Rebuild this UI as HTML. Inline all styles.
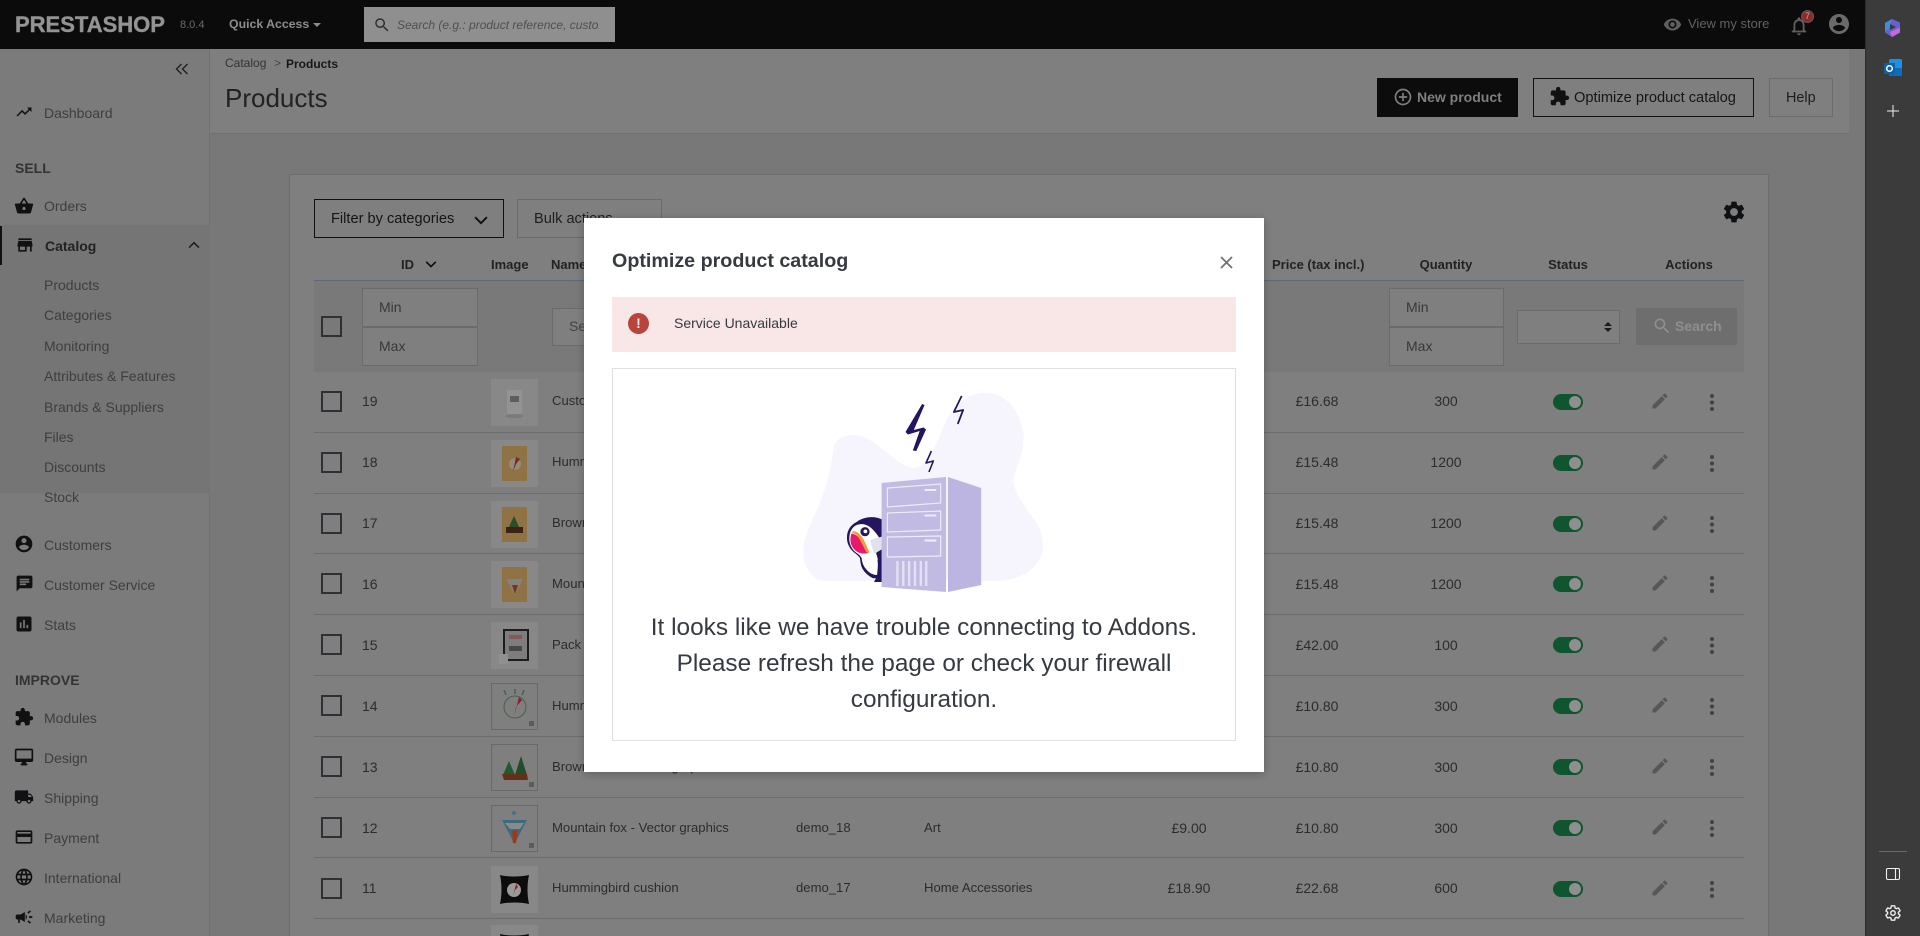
<!DOCTYPE html>
<html lang="en"><head><meta charset="utf-8"><title>Products</title>
<style>
html,body{margin:0;padding:0;width:1920px;height:936px;overflow:hidden;background:#787878;font-family:"Liberation Sans",sans-serif;color:#2c2c2e}
div,span,svg{position:absolute}
#root{left:0;top:0;width:1920px;height:936px;overflow:hidden;background:#787878}
.t{white-space:nowrap;line-height:20px;height:20px;margin-top:-10px;font-size:14px}
.c{transform:translateX(-50%)}
.s{left:44px;color:#3e3e3e;margin-top:-10.5px}
.ic{fill:#111113}
.b{font-weight:bold}
.r{left:0;top:0;width:0;height:0}
.r .t{margin-top:-10.5px}
.cb{left:321px;top:-11px;width:17px;height:17px;border:2px solid #2e3036;background:transparent}
.id{left:362px}
.im{left:491px;top:-23px;width:47px;height:47px}
.nm,.rf,.ct{font-size:13.1px}
.nm{left:552px}.rf{left:796px}.ct{left:924px}
.p1{left:1189px}.p2{left:1317px}.q{left:1446px}
.tg{left:1553px;top:-8px;width:30px;height:16px;border-radius:8px;background:#0f5530}
.tg i{position:absolute;left:16px;top:2px;width:12px;height:12px;border-radius:50%;background:#8f8f8f}
.pe{left:1650px;top:-11px;width:20px;height:20px;fill:#575757}
.dt{left:1710px;top:-8px;width:4px;height:4px;border-radius:50%;background:#3f4348;box-shadow:0 6.5px 0 #3f4348,0 13px 0 #3f4348}
.ln{left:314px;width:1430px;height:1px;background:#6c6c6c}
.inp{background:#7f7f7f;border:1px solid #6b6b6b;box-sizing:border-box}
</style></head><body>
<div id="root">
<svg width="0" height="0" style="left:0;top:0"><defs>
<symbol id="i-trend" viewBox="0 0 24 24"><path d="M16 6l2.29 2.29-4.88 4.88-4-4L2 16.59 3.41 18l6-6 4 4 6.3-6.29L22 12V6z"/></symbol>
<symbol id="i-basket" viewBox="0 0 24 24"><path d="M17.21 9l-4.38-6.56c-.19-.28-.51-.42-.83-.42-.32 0-.64.14-.83.43L6.79 9H2c-.55 0-1 .45-1 1 0 .09.01.18.04.27l2.54 9.27c.23.84 1 1.46 1.92 1.46h13c.92 0 1.69-.62 1.93-1.46l2.54-9.27L23 10c0-.55-.45-1-1-1h-4.79zM9 9l3-4.4L15 9H9zm3 8c-1.1 0-2-.9-2-2s.9-2 2-2 2 .9 2 2-.9 2-2 2z"/></symbol>
<symbol id="i-store" viewBox="0 0 24 24"><path d="M20 4H4v2h16V4zm1 10v-2l-1-5H4l-1 5v2h1v6h10v-6h4v6h2v-6h1zm-9 4H6v-4h6v4z"/></symbol>
<symbol id="i-acc" viewBox="0 0 24 24"><path d="M12 2C6.48 2 2 6.48 2 12s4.48 10 10 10 10-4.48 10-10S17.52 2 12 2zm0 3c1.66 0 3 1.34 3 3s-1.34 3-3 3-3-1.34-3-3 1.34-3 3-3zm0 14.2c-2.5 0-4.71-1.28-6-3.22.03-1.99 4-3.08 6-3.08 1.99 0 5.97 1.09 6 3.08-1.29 1.94-3.5 3.22-6 3.22z"/></symbol>
<symbol id="i-chat" viewBox="0 0 24 24"><path d="M20 2H4c-1.1 0-2 .9-2 2v18l4-4h14c1.1 0 2-.9 2-2V4c0-1.1-.9-2-2-2zM6 9h12v2H6V9zm8 5H6v-2h8v2zm4-6H6V6h12v2z"/></symbol>
<symbol id="i-stat" viewBox="0 0 24 24"><path d="M19 3H5c-1.1 0-2 .9-2 2v14c0 1.1.9 2 2 2h14c1.1 0 2-.9 2-2V5c0-1.1-.9-2-2-2zM9 17H7v-7h2v7zm4 0h-2V7h2v10zm4 0h-2v-4h2v4z"/></symbol>
<symbol id="i-ext" viewBox="0 0 24 24"><path d="M20.5 11H19V7c0-1.1-.9-2-2-2h-4V3.5C13 2.12 11.88 1 10.5 1S8 2.12 8 3.5V5H4c-1.1 0-1.99.9-1.99 2v3.8H3.5c1.49 0 2.7 1.21 2.7 2.7s-1.21 2.7-2.7 2.7H2V20c0 1.1.9 2 2 2h3.8v-1.5c0-1.49 1.21-2.7 2.7-2.7 1.49 0 2.7 1.21 2.7 2.7V22H17c1.1 0 2-.9 2-2v-4h1.5c1.38 0 2.5-1.12 2.5-2.5S21.88 11 20.5 11z"/></symbol>
<symbol id="i-desk" viewBox="0 0 24 24"><path d="M21 2H3c-1.1 0-2 .9-2 2v12c0 1.1.9 2 2 2h7l-2 3v1h8v-1l-2-3h7c1.1 0 2-.9 2-2V4c0-1.1-.9-2-2-2zm0 12H3V4h18v10z"/></symbol>
<symbol id="i-ship" viewBox="0 0 24 24"><path d="M20 8h-3V4H3c-1.1 0-2 .9-2 2v11h2c0 1.66 1.34 3 3 3s3-1.34 3-3h6c0 1.66 1.34 3 3 3s3-1.34 3-3h2v-5l-3-4zM6 18.5c-.83 0-1.5-.67-1.5-1.5s.67-1.5 1.5-1.5 1.5.67 1.5 1.5-.67 1.5-1.5 1.5zm13.5-9l1.96 2.5H17V9.5h2.5zm-1.5 9c-.83 0-1.5-.67-1.5-1.5s.67-1.5 1.5-1.5 1.5.67 1.5 1.5-.67 1.5-1.5 1.5z"/></symbol>
<symbol id="i-pay" viewBox="0 0 24 24"><path d="M20 4H4c-1.11 0-1.99.89-1.99 2L2 18c0 1.11.89 2 2 2h16c1.11 0 2-.89 2-2V6c0-1.11-.89-2-2-2zm0 14H4v-6h16v6zm0-10H4V6h16v2z"/></symbol>
<symbol id="i-lang" viewBox="0 0 24 24"><path d="M11.99 2C6.47 2 2 6.48 2 12s4.47 10 9.99 10C17.52 22 22 17.52 22 12S17.52 2 11.99 2zm6.93 6h-2.95c-.32-1.25-.78-2.45-1.38-3.56 1.84.63 3.37 1.91 4.33 3.56zM12 4.04c.83 1.2 1.48 2.53 1.91 3.96h-3.82c.43-1.43 1.08-2.76 1.91-3.96zM4.26 14C4.1 13.36 4 12.69 4 12s.1-1.36.26-2h3.38c-.08.66-.14 1.32-.14 2 0 .68.06 1.34.14 2H4.26zm.82 2h2.95c.32 1.25.78 2.45 1.38 3.56-1.84-.63-3.37-1.9-4.33-3.56zm2.95-8H5.08c.96-1.66 2.49-2.93 4.33-3.56C8.81 5.55 8.35 6.75 8.03 8zM12 19.96c-.83-1.2-1.48-2.53-1.91-3.96h3.82c-.43 1.43-1.08 2.76-1.91 3.96zM14.34 14H9.66c-.09-.66-.16-1.32-.16-2 0-.68.07-1.35.16-2h4.68c.09.65.16 1.32.16 2 0 .68-.07 1.34-.16 2zm.25 5.56c.6-1.11 1.06-2.31 1.38-3.56h2.95c-.96 1.65-2.49 2.93-4.33 3.56zM16.36 14c.08-.66.14-1.32.14-2 0-.68-.06-1.34-.14-2h3.38c.16.64.26 1.31.26 2s-.1 1.36-.26 2h-3.38z"/></symbol>
<symbol id="i-camp" viewBox="0 0 24 24"><path d="M18 11v2h4v-2h-4zm-2 6.61c.96.71 2.21 1.65 3.2 2.39.4-.53.8-1.07 1.2-1.6-.99-.74-2.24-1.68-3.2-2.4-.4.54-.8 1.08-1.2 1.61zM20.4 5.6c-.4-.53-.8-1.07-1.2-1.6-.99.74-2.24 1.68-3.2 2.4.4.53.8 1.07 1.2 1.6.96-.72 2.21-1.65 3.2-2.4zM4 9c-1.1 0-2 .9-2 2v2c0 1.1.9 2 2 2h1v4h2v-4h1l5 3V6L8 9H4zm11.5 3c0-1.33-.58-2.53-1.5-3.35v6.69c.92-.81 1.5-2.01 1.5-3.34z"/></symbol>
<symbol id="i-search" viewBox="0 0 24 24"><path d="M15.5 14h-.79l-.28-.27C15.41 12.59 16 11.11 16 9.5 16 5.91 13.09 3 9.5 3S3 5.91 3 9.5 5.91 16 9.5 16c1.61 0 3.09-.59 4.23-1.57l.27.28v.79l5 4.99L20.49 19l-4.99-5zm-6 0C7.01 14 5 11.99 5 9.5S7.01 5 9.5 5 14 7.01 14 9.5 11.99 14 9.5 14z"/></symbol>
<symbol id="i-eye" viewBox="0 0 24 24"><path d="M12 4.5C7 4.5 2.73 7.61 1 12c1.73 4.39 6 7.5 11 7.5s9.27-3.11 11-7.5c-1.73-4.39-6-7.5-11-7.5zM12 17c-2.76 0-5-2.24-5-5s2.24-5 5-5 5 2.24 5 5-2.24 5-5 5zm0-8c-1.66 0-3 1.34-3 3s1.34 3 3 3 3-1.34 3-3-1.34-3-3-3z"/></symbol>
<symbol id="i-bell" viewBox="0 0 24 24"><path d="M12 22c1.1 0 2-.9 2-2h-4c0 1.1.9 2 2 2zm6-6v-5c0-3.07-1.63-5.64-4.5-6.32V4c0-.83-.67-1.5-1.5-1.5s-1.5.67-1.5 1.5v.68C7.64 5.36 6 7.92 6 11v5l-2 2v1h16v-1l-2-2zm-2 1H8v-6c0-2.48 1.51-4.5 4-4.5s4 2.02 4 4.5v6z"/></symbol>
<symbol id="i-add" viewBox="0 0 24 24"><path d="M13 7h-2v4H7v2h4v4h2v-4h4v-2h-4V7zm-1-5C6.48 2 2 6.48 2 12s4.48 10 10 10 10-4.48 10-10S17.52 2 12 2zm0 18c-4.41 0-8-3.59-8-8s3.59-8 8-8 8 3.59 8 8-3.59 8-8 8z"/></symbol>
<symbol id="i-gear" viewBox="0 0 24 24"><path d="M19.14 12.94c.04-.3.06-.61.06-.94 0-.32-.02-.64-.07-.94l2.03-1.58c.18-.14.23-.41.12-.61l-1.92-3.32c-.12-.22-.37-.29-.59-.22l-2.39.96c-.5-.38-1.03-.7-1.62-.94l-.36-2.54c-.04-.24-.24-.41-.48-.41h-3.84c-.24 0-.43.17-.47.41l-.36 2.54c-.59.24-1.13.57-1.62.94l-2.39-.96c-.22-.08-.47 0-.59.22L2.74 8.87c-.12.21-.08.47.12.61l2.03 1.58c-.05.3-.09.63-.09.94s.02.64.07.94l-2.03 1.58c-.18.14-.23.41-.12.61l1.92 3.32c.12.22.37.29.59.22l2.39-.96c.5.38 1.03.7 1.62.94l.36 2.54c.05.24.24.41.48.41h3.84c.24 0 .44-.17.47-.41l.36-2.54c.59-.24 1.13-.56 1.62-.94l2.39.96c.22.08.47 0 .59-.22l1.92-3.32c.12-.22.07-.47-.12-.61l-2.01-1.58zM12 15.6c-1.98 0-3.6-1.62-3.6-3.6s1.62-3.6 3.6-3.6 3.6 1.62 3.6 3.6-1.62 3.6-3.6 3.6z"/></symbol>
<symbol id="i-edit" viewBox="0 0 24 24"><path d="M3 17.25V21h3.75L17.81 9.94l-3.75-3.75L3 17.25zM20.71 7.04c.39-.39.39-1.02 0-1.41l-2.34-2.34c-.39-.39-1.02-.39-1.41 0l-1.83 1.83 3.75 3.75 1.83-1.83z"/></symbol>
<symbol id="th-mug" viewBox="0 0 47 47"><rect width="47" height="47" fill="#888"/><path d="M16 11h15v23c-3 3-12 3-15 0z" fill="#939393"/><ellipse cx="23.5" cy="37" rx="9" ry="2" fill="#7a7a7a"/><rect x="19" y="17" width="9" height="6" fill="#5e5e60"/></symbol>
<symbol id="th-nb1" viewBox="0 0 47 47"><rect width="47" height="47" fill="#888"/><rect x="11" y="6" width="25" height="35" fill="#8f7345"/><circle cx="24" cy="24" r="6" fill="#958a76"/><path d="M25 17l-3 15 3-8 4-5z" fill="#702a2e"/></symbol>
<symbol id="th-nb2" viewBox="0 0 47 47"><rect width="47" height="47" fill="#888"/><rect x="11" y="6" width="25" height="35" fill="#8f7345"/><path d="M17 28l6-13 6 13z" fill="#27502a"/><rect x="15" y="26" width="17" height="6" fill="#3b2212"/></symbol>
<symbol id="th-nb3" viewBox="0 0 47 47"><rect width="47" height="47" fill="#888"/><rect x="11" y="6" width="25" height="35" fill="#8f7345"/><path d="M15 18h17l-8 16z" fill="#84827c"/><path d="M21 24h6l-3 9z" fill="#82321a"/></symbol>
<symbol id="th-pack" viewBox="0 0 47 47"><rect width="47" height="47" fill="#888"/><rect x="13" y="8" width="24" height="30" fill="#7d7d7d" stroke="#1c1c1c" stroke-width="2"/><rect x="18" y="13" width="13" height="4" fill="#85595c"/><rect x="18" y="24" width="13" height="5" fill="#484848"/><rect x="8" y="32" width="9" height="10" fill="#909090"/></symbol>
<symbol id="th-v1" viewBox="0 0 47 47"><rect x=".5" y=".5" width="46" height="46" fill="#7f7f7f" stroke="#696969"/><circle cx="24" cy="24" r="11" fill="none" stroke="#49604a"/><path d="M28 14l-5 20 2-10 6-7z" fill="#8d1e35"/><path d="M13 7l2 5M24 6v5M33 7l-2 5" stroke="#4a5a5c" stroke-width="1.4"/><rect x="38" y="38" width="5" height="5" fill="#5c5c5c"/></symbol>
<symbol id="th-v2" viewBox="0 0 47 47"><rect x=".5" y=".5" width="46" height="46" fill="#7f7f7f" stroke="#696969"/><path d="M12 31l6-14 6 14z" fill="#215a2f"/><path d="M24 31l6-19 6 19z" fill="#1e4e2a"/><path d="M11 30h25l1 6H13z" fill="#63301a"/><rect x="38" y="38" width="5" height="5" fill="#5c5c5c"/></symbol>
<symbol id="th-v3" viewBox="0 0 47 47"><rect x=".5" y=".5" width="46" height="46" fill="#7f7f7f" stroke="#696969"/><path d="M11 15h25L23.5 39z" fill="#3f6a7d"/><path d="M14 18h19l-4 6H19z" fill="#8a8a8a"/><path d="M21 26l6-1-2 13h-3z" fill="#9c3a18"/><circle cx="23" cy="8" r="2" fill="#4f6e80"/><rect x="38" y="38" width="5" height="5" fill="#5c5c5c"/></symbol>
<symbol id="th-cu" viewBox="0 0 47 47"><rect width="47" height="47" fill="#888"/><path d="M9 9c8 2 21 2 29 0-2 9-2 20 0 29-8-2-21-2-29 0 2-9 2-20 0-29z" fill="#0c0c0c"/><circle cx="23" cy="24" r="7" fill="#9c9a96"/><path d="M25 18l-3 12 2-6 3-3z" fill="#8a1f2f"/></symbol>
</defs></svg>

<!-- top bar -->
<div style="left:0;top:0;width:1865px;height:49px;background:#0b0b0b"></div>
<span class="t b" style="left:15px;top:24.5px;font-size:22px;color:#939393;-webkit-text-stroke:.4px #939393">PRESTASHOP</span>
<span class="t" style="left:180px;top:25px;font-size:11px;color:#6b6b6b">8.0.4</span>
<span class="t b" style="left:229px;top:24px;font-size:12.3px;color:#8d8d8d">Quick Access</span>
<div style="left:313px;top:23px;border:4px solid transparent;border-top-color:#8d8d8d;border-bottom:0"></div>
<div style="left:364px;top:7px;width:251px;height:35px;background:#8f8f8f"></div>
<svg style="left:373px;top:16px;fill:#2f2f2f" width="18" height="18"><use href="#i-search"/></svg>
<div style="left:397px;top:7px;width:202px;height:35px;overflow:hidden"><span class="t" style="left:0;top:17.5px;font-size:12px;font-style:italic;color:#4f4f4f">Search (e.g.: product reference, customer name…)</span></div>
<svg style="left:1663px;top:15px;fill:#5f5f5f" width="19" height="19"><use href="#i-eye"/></svg>
<span class="t" style="left:1688px;top:24px;font-size:13px;color:#626262">View my store</span>
<svg style="left:1788px;top:14px;fill:#5f5f5f" width="22" height="24"><use href="#i-bell"/></svg>
<div style="left:1801px;top:10px;width:11px;height:11px;border-radius:50%;background:#8f2a26;border:1.5px solid #5c5c5c;color:#aaa;font-size:9px;line-height:11px;text-align:center">7</div>
<svg style="left:1827px;top:12px;fill:#6a6a6a" width="24" height="24"><use href="#i-acc"/></svg>

<!-- sidebar -->
<div style="left:0;top:49px;width:209px;height:887px;background:#7b7b7b;border-right:1px solid #727272"></div>
<div style="left:0;top:225px;width:209px;height:268px;background:#757575"></div>
<div style="left:0;top:226px;width:2px;height:39px;background:#111"></div>
<svg style="left:175px;top:62px;fill:none;stroke:#1f1f1f;stroke-width:1.4" width="14" height="14"><path d="M6.5 2L1.5 7l5 5M12.5 2l-5 5 5 5"/></svg>

<svg class="ic" style="left:15px;top:103px" width="18" height="18"><use href="#i-trend"/></svg>
<span class="t s" style="top:113px">Dashboard</span>
<span class="t b" style="left:15px;top:168px;color:#333">SELL</span>
<svg class="ic" style="left:14px;top:196px" width="20" height="20"><use href="#i-basket"/></svg>
<span class="t s" style="top:206px">Orders</span>
<svg class="ic" style="left:15px;top:235px" width="20" height="20"><use href="#i-store"/></svg>
<span class="t b" style="left:45px;top:246px;color:#222">Catalog</span>
<svg style="left:184px;top:235px;fill:#1a1a1a" width="20" height="20"><path d="M3.6 12.5L10 6.1l6.4 6.4-1.2 1.2L10 8.5l-5.2 5.2z" transform="translate(1.5 1.5) scale(.85)"/></svg>
<span class="t s" style="top:285px">Products</span>
<span class="t s" style="top:315px">Categories</span>
<span class="t s" style="top:346px">Monitoring</span>
<span class="t s" style="top:376px">Attributes &amp; Features</span>
<span class="t s" style="top:407px">Brands &amp; Suppliers</span>
<span class="t s" style="top:437px">Files</span>
<span class="t s" style="top:467px">Discounts</span>
<span class="t s" style="top:497.5px">Stock</span>
<svg class="ic" style="left:14px;top:534px" width="20" height="20"><use href="#i-acc"/></svg>
<span class="t s" style="top:545px">Customers</span>
<svg class="ic" style="left:15px;top:574px" width="19" height="19"><use href="#i-chat"/></svg>
<span class="t s" style="top:585px">Customer Service</span>
<svg class="ic" style="left:14px;top:614px" width="20" height="20"><use href="#i-stat"/></svg>
<span class="t s" style="top:625px">Stats</span>
<span class="t b" style="left:15px;top:679.5px;color:#333">IMPROVE</span>
<svg class="ic" style="left:14px;top:707px" width="20" height="20"><use href="#i-ext"/></svg>
<span class="t s" style="top:718px">Modules</span>
<svg class="ic" style="left:14px;top:747px" width="20" height="20"><use href="#i-desk"/></svg>
<span class="t s" style="top:758px">Design</span>
<svg class="ic" style="left:14px;top:787px" width="20" height="20"><use href="#i-ship"/></svg>
<span class="t s" style="top:798px">Shipping</span>
<svg class="ic" style="left:14px;top:827px" width="20" height="20"><use href="#i-pay"/></svg>
<span class="t s" style="top:838px">Payment</span>
<svg class="ic" style="left:14px;top:867px" width="20" height="20"><use href="#i-lang"/></svg>
<span class="t s" style="top:878px">International</span>
<svg class="ic" style="left:14px;top:907px" width="20" height="20"><use href="#i-camp"/></svg>
<span class="t s" style="top:918px">Marketing</span>

<!-- head -->
<div style="left:210px;top:49px;width:1639px;height:84px;background:#7f7f7f;border-bottom:1px solid #707070"></div>
<span class="t" style="left:225px;top:63px;font-size:12px;color:#333">Catalog</span>
<span class="t" style="left:274px;top:63px;font-size:12px;color:#444">&gt;</span>
<span class="t b" style="left:286px;top:63.5px;font-size:12px;color:#181818">Products</span>
<span class="t" style="left:225px;top:98px;font-size:26px;line-height:30px;height:30px;margin-top:-15px;color:#222">Products</span>
<div style="left:1377px;top:78px;width:141px;height:39px;background:#0c0c0c"></div>
<svg style="left:1393px;top:87px;fill:#7e7e7e" width="20" height="20"><use href="#i-add"/></svg>
<span class="t b" style="left:1417px;top:97px;font-size:14px;color:#7f7f7f">New product</span>
<div style="left:1533px;top:78px;width:219px;height:37px;border:1px solid #111;"></div>
<svg class="ic" style="left:1549px;top:86px" width="21" height="21"><use href="#i-ext"/></svg>
<span class="t" style="left:1574px;top:98px;font-size:14.65px;color:#151515">Optimize product catalog</span>
<div style="left:1769px;top:78px;width:62px;height:37px;border:1px solid #6c6c6c"></div>
<span class="t" style="left:1786px;top:98px;font-size:14.4px;color:#1c1c1c">Help</span>

<!-- card -->
<div style="left:289px;top:174px;width:1478px;height:790px;background:#7f7f7f;border:1px solid #6e6e6e"></div>
<div style="left:314px;top:199px;width:188px;height:37px;border:1px solid #101010"></div>
<span class="t" style="left:331px;top:219px;font-size:14.6px;color:#141414">Filter by categories</span>
<svg style="left:471px;top:210px;fill:#111" width="20" height="20"><path d="M4.8 6.5L10 11.7l5.2-5.2 1.4 1.4L10 14.5 3.4 7.9z"/></svg>
<div style="left:517px;top:199px;width:143px;height:37px;border:1px solid #6a6a6a"></div>
<span class="t" style="left:534px;top:219px;font-size:14.6px;color:#1e1e1e">Bulk actions</span>
<svg style="left:1721px;top:199px;fill:#101114" width="26" height="26"><use href="#i-gear"/></svg>

<!-- table head -->
<span class="t b" style="left:401px;top:264.5px;font-size:13px;color:#222">ID</span>
<svg style="left:423px;top:256px;fill:#111" width="16" height="16"><path d="M3.8 5.2L8 9.4l4.2-4.2 1.2 1.2L8 11.8 2.6 6.4z"/></svg>
<span class="t b" style="left:491px;top:264.5px;font-size:13px;color:#222">Image</span>
<span class="t b" style="left:551px;top:264.5px;font-size:13px;color:#222">Name</span>
<span class="t b" style="left:1272px;top:264.5px;font-size:13px;color:#222">Price (tax incl.)</span>
<span class="t b c" style="left:1446px;top:264.5px;font-size:13px;color:#222">Quantity</span>
<span class="t b c" style="left:1568px;top:264.5px;font-size:13px;color:#222">Status</span>
<span class="t b c" style="left:1689px;top:264.5px;font-size:13px;color:#222">Actions</span>
<div style="left:314px;top:280px;width:1430px;height:1px;background:#5b6a7c"></div>

<!-- filter row -->
<div style="left:314px;top:281px;width:1430px;height:91px;background:#797979"></div>
<div class="cb" style="top:316px"></div>
<div class="inp" style="left:362px;top:288px;width:116px;height:39px"></div>
<div class="inp" style="left:362px;top:327px;width:116px;height:39px"></div>
<span class="t" style="left:379px;top:307px;color:#383838">Min</span>
<span class="t" style="left:379px;top:346px;color:#383838">Max</span>
<div class="inp" style="left:552px;top:308px;width:200px;height:38px"></div>
<span class="t" style="left:569px;top:326px;color:#444">Search name</span>
<div class="inp" style="left:1389px;top:288px;width:115px;height:39px"></div>
<div class="inp" style="left:1389px;top:327px;width:115px;height:39px"></div>
<span class="t" style="left:1406px;top:307px;color:#383838">Min</span>
<span class="t" style="left:1406px;top:346px;color:#383838">Max</span>
<div class="inp" style="left:1517px;top:310px;width:103px;height:34px"></div>
<div style="left:1604px;top:322px;border:4px solid transparent;border-bottom:4px solid #1c1c1c;border-top:0"></div>
<div style="left:1604px;top:328px;border:4px solid transparent;border-top:4px solid #1c1c1c;border-bottom:0"></div>
<div style="left:1636px;top:308px;width:101px;height:37px;background:#6e6e6e"></div>
<svg style="left:1652px;top:316px;fill:#8f8f8f" width="20" height="20"><use href="#i-search"/></svg>
<span class="t b" style="left:1675px;top:326px;color:#8f8f8f">Search</span>

<!-- rows -->
<div class="r" style="top:401.5px"><div class="cb"></div><span class="t id">19</span><svg class="im"><use href="#th-mug"/></svg><span class="t nm">Customizable mug</span><span class="t rf">demo_13</span><span class="t ct">Home Accessories</span><span class="t p1 c">£13.90</span><span class="t p2 c">£16.68</span><span class="t q c">300</span><div class="tg"><i></i></div><svg class="pe"><use href="#i-edit"/></svg><div class="dt"></div></div>
<div class="ln" style="top:432px"></div>
<div class="r" style="top:462.5px"><div class="cb"></div><span class="t id">18</span><svg class="im"><use href="#th-nb1"/></svg><span class="t nm">Hummingbird notebook</span><span class="t p2 c">£15.48</span><span class="t q c">1200</span><div class="tg"><i></i></div><svg class="pe"><use href="#i-edit"/></svg><div class="dt"></div></div>
<div class="ln" style="top:493px"></div>
<div class="r" style="top:523.5px"><div class="cb"></div><span class="t id">17</span><svg class="im"><use href="#th-nb2"/></svg><span class="t nm">Brown bear notebook</span><span class="t p2 c">£15.48</span><span class="t q c">1200</span><div class="tg"><i></i></div><svg class="pe"><use href="#i-edit"/></svg><div class="dt"></div></div>
<div class="ln" style="top:553px"></div>
<div class="r" style="top:584px"><div class="cb"></div><span class="t id">16</span><svg class="im"><use href="#th-nb3"/></svg><span class="t nm">Mountain fox notebook</span><span class="t p2 c">£15.48</span><span class="t q c">1200</span><div class="tg"><i></i></div><svg class="pe"><use href="#i-edit"/></svg><div class="dt"></div></div>
<div class="ln" style="top:614px"></div>
<div class="r" style="top:645px"><div class="cb"></div><span class="t id">15</span><svg class="im"><use href="#th-pack"/></svg><span class="t nm">Pack Mug + Framed poster</span><span class="t p2 c">£42.00</span><span class="t q c">100</span><div class="tg"><i></i></div><svg class="pe"><use href="#i-edit"/></svg><div class="dt"></div></div>
<div class="ln" style="top:675px"></div>
<div class="r" style="top:706px"><div class="cb"></div><span class="t id">14</span><svg class="im"><use href="#th-v1"/></svg><span class="t nm">Hummingbird - Vector graphics</span><span class="t p2 c">£10.80</span><span class="t q c">300</span><div class="tg"><i></i></div><svg class="pe"><use href="#i-edit"/></svg><div class="dt"></div></div>
<div class="ln" style="top:736px"></div>
<div class="r" style="top:767px"><div class="cb"></div><span class="t id">13</span><svg class="im"><use href="#th-v2"/></svg><span class="t nm">Brown bear - Vector graphics</span><span class="t p2 c">£10.80</span><span class="t q c">300</span><div class="tg"><i></i></div><svg class="pe"><use href="#i-edit"/></svg><div class="dt"></div></div>
<div class="ln" style="top:797px"></div>
<div class="r" style="top:828px"><div class="cb"></div><span class="t id">12</span><svg class="im"><use href="#th-v3"/></svg><span class="t nm">Mountain fox - Vector graphics</span><span class="t rf">demo_18</span><span class="t ct">Art</span><span class="t p1 c">£9.00</span><span class="t p2 c">£10.80</span><span class="t q c">300</span><div class="tg"><i></i></div><svg class="pe"><use href="#i-edit"/></svg><div class="dt"></div></div>
<div class="ln" style="top:857px"></div>
<div class="r" style="top:888.5px"><div class="cb"></div><span class="t id">11</span><svg class="im"><use href="#th-cu"/></svg><span class="t nm">Hummingbird cushion</span><span class="t rf">demo_17</span><span class="t ct">Home Accessories</span><span class="t p1 c">£18.90</span><span class="t p2 c">£22.68</span><span class="t q c">600</span><div class="tg"><i></i></div><svg class="pe"><use href="#i-edit"/></svg><div class="dt"></div></div>
<div class="ln" style="top:918px"></div>
<div class="r" style="top:948px"><svg class="im"><use href="#th-cu"/></svg></div>

<!-- edge side panel -->
<div style="left:1865px;top:0;width:55px;height:936px;background:#3b3b3b;border-left:1px solid #2c2c2c;box-sizing:border-box"></div>
<svg style="left:1883px;top:18px" width="20" height="20" viewBox="0 0 20 20"><path d="M9 1l8 3.5v10L9 19 2 14.5V5z" fill="#6a5fd0"/><path d="M9 1L2 5v8l5-3V6z" fill="#3e8fd8"/><path d="M17 9.5L7 14l2 5 8-4.5z" fill="#c06bd6"/><path d="M7 6l6 3-6 3z" fill="#3b3b3b"/></svg>
<svg style="left:1883px;top:58px" width="20" height="20" viewBox="0 0 20 20"><rect x="6" y="1" width="13" height="17" rx="1.5" fill="#1f8fe0"/><rect x="6" y="10" width="13" height="8" fill="#0f6cbd"/><rect x="1" y="5" width="11" height="11" rx="1" fill="#0c62a8"/><circle cx="6.5" cy="10.5" r="2.8" fill="none" stroke="#fff" stroke-width="1.5"/></svg>
<svg style="left:1886px;top:104px;stroke:#f0f0f0;stroke-width:1" width="14" height="14"><path d="M7 1v12M1 7h12"/></svg>
<div style="left:1879px;top:851px;width:28px;height:1px;background:#6a6a6a"></div>
<svg style="left:1885px;top:867px;fill:none;stroke:#f0f0f0;stroke-width:1.1" width="16" height="14"><rect x="1.5" y="1.5" width="13" height="11" rx="1.5"/><path d="M10.5 1.5v11"/></svg>
<svg style="left:1884px;top:904px;fill:none;stroke:#ececec;stroke-width:1.9" width="18" height="18" viewBox="0 0 24 24"><path d="M19.14 12.94c.04-.3.06-.61.06-.94 0-.32-.02-.64-.07-.94l2.03-1.58c.18-.14.23-.41.12-.61l-1.92-3.32c-.12-.22-.37-.29-.59-.22l-2.39.96c-.5-.38-1.03-.7-1.62-.94l-.36-2.54c-.04-.24-.24-.41-.48-.41h-3.84c-.24 0-.43.17-.47.41l-.36 2.54c-.59.24-1.13.57-1.62.94l-2.39-.96c-.22-.08-.47 0-.59.22L2.74 8.87c-.12.21-.08.47.12.61l2.03 1.58c-.05.3-.09.63-.09.94s.02.64.07.94l-2.03 1.58c-.18.14-.23.41-.12.61l1.92 3.32c.12.22.37.29.59.22l2.39-.96c.5.38 1.03.7 1.62.94l.36 2.54c.05.24.24.41.48.41h3.84c.24 0 .44-.17.47-.41l.36-2.54c.59-.24 1.13-.56 1.62-.94l2.39.96c.22.08.47 0 .59-.22l1.92-3.32c.12-.22.07-.47-.12-.61l-2.01-1.58z"/><circle cx="12" cy="12" r="3"/></svg>

<!-- modal -->
<div style="left:584px;top:218px;width:680px;height:554px;background:#fff;box-shadow:0 2px 8px rgba(0,0,0,.25)"></div>
<span class="t b" style="left:612px;top:261px;font-size:19.7px;line-height:26px;height:26px;margin-top:-13px;color:#363a41">Optimize product catalog</span>
<svg style="left:1220px;top:256px;fill:none;stroke:#6f7378;stroke-width:1.8" width="13" height="13"><path d="M1 1l11 11M12 1L1 12"/></svg>
<div style="left:612px;top:297px;width:624px;height:55px;background:#f9e6e6"></div>
<div style="left:628px;top:313px;width:21px;height:21px;border-radius:50%;background:#b8443b;color:#f9e6e6;font:bold 14px/21px 'Liberation Sans',sans-serif;text-align:center">!</div>
<span class="t" style="left:674px;top:323px;color:#363a41">Service Unavailable</span>
<div style="left:612px;top:368px;width:622px;height:371px;border:1px solid #dfdfe2"></div>
<svg style="left:0;top:0" width="1920" height="936">
<g transform="translate(780 0) scale(.9767 1) translate(-780 0)">
<path fill="#f6f5fd" d="M804 547C806 530 815 518 822 500C830 480 833 462 835 447C840 432 860 432 875 442C890 452 905 468 917 468C930 468 940 445 948 425C958 402 975 392 992 393C1012 394 1025 410 1029 433C1032 455 1018 470 1019 482C1021 496 1032 508 1042 522C1052 538 1052 555 1041 566C1030 577 1015 581 1000 581L825 581C810 578 803 565 804 547Z"/>
</g>
<!-- puffin -->
<path fill="#25145e" d="M883 520C876 516 865 516 857 521.7C850 525 847 531 847 537C846.5 543 850 549 853.3 551.7C856 554 859 556 860 558.3C860.5 563 861 567 863.3 570C866 574 870 577 873.3 578.3L876 578.3L874 582L884 582Z"/>
<path fill="#fff" d="M856.7 525C852 527 849.5 532 849.3 538C849 544 852 549 855 551.7C858 554 861 556 861.7 558.3C862 563 864 567 866 569C869 573 873 575 877 575C878 568 878 563 877.5 560C880 557 882 555 884 553V546C880 538 875 531 870 527C866 524 861 523.5 856.7 525Z"/>
<path fill="#25145e" d="M876 553L884 546V576L878 570C879 565 878 558 876 553Z"/>
<path fill="#e0e1ec" d="M870 540L884 536V548L874 554Z"/>
<path fill="#e8186c" d="M851.5 533.5C856 534 860 538 863 543L868.5 553C861 555 854 552 851 544C850 540 850.5 536 851.5 533.5Z"/>
<path fill="#f39b3c" d="M853 531C858 531.5 861 535 864 540L869.5 552.5L866.5 552.5L860.5 541C858 536 855.5 533.5 852 533Z"/>
<circle cx="865" cy="531.7" r="4.6" fill="#25145e"/><circle cx="865.4" cy="531.4" r="1.9" fill="#fff"/>
<g transform="translate(780 0) scale(.9767 1) translate(-780 0)">
<path fill="#c1bbe3" d="M884 483L950 477V592L884 587Z"/>
<path fill="#bcb5e2" d="M952 477L986 488V585L952 592Z"/>
<g fill="none" stroke="#eeecf8" stroke-width="1.2"><path d="M890 488L944.5 484V503L890 507Z"/><path d="M890 513L944.5 511V530L890 532Z"/><path d="M890 537L944.5 536V556L890 557Z"/></g>
<g fill="#f0eefa"><rect x="928" y="489" width="12" height="2"/><rect x="928" y="514.5" width="12" height="2"/><rect x="928" y="539.5" width="12" height="2"/>
<rect x="899" y="561" width="2.4" height="25" opacity=".75"/><rect x="905" y="561" width="2.4" height="25" opacity=".75"/><rect x="911" y="561" width="2.4" height="25" opacity=".75"/><rect x="917" y="561" width="2.4" height="25" opacity=".75"/><rect x="923" y="561" width="2.4" height="25" opacity=".75"/><rect x="928.5" y="561" width="2.4" height="25" opacity=".75"/></g>
<path fill="#25145e" d="M925.5 404L908.5 432L911 434.5L923 431L916 450.5L919.5 451L929.5 429.5L927 427.5L917 430L928 405Z"/>
<path fill="none" stroke="#25145e" stroke-width="1.8" stroke-linejoin="round" d="M966 396L958 412L967.5 410L962 424"/>
<path fill="none" stroke="#25145e" stroke-width="1.6" stroke-linejoin="round" d="M935 451L929.5 463L937 461L932.5 472"/>
</g>
</svg>
<div style="left:612px;top:609.6px;width:624px;text-align:center;font-size:24.4px;line-height:36px;color:#363a41">It looks like we have trouble connecting to Addons.<br>Please refresh the page or check your firewall<br>configuration.</div>
</div>
</body></html>
